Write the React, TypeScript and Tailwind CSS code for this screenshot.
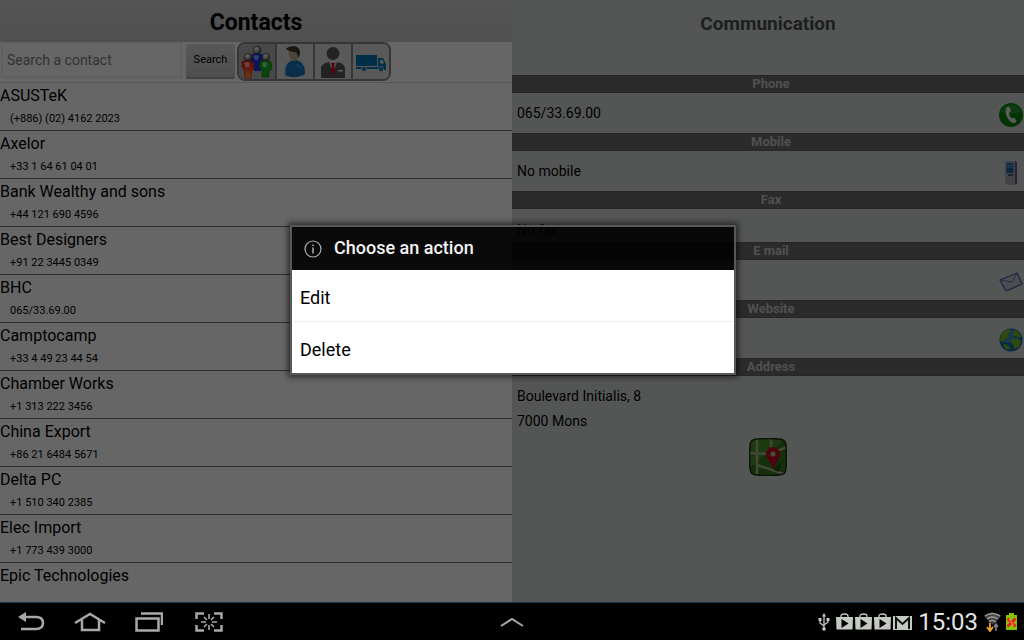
import { Fragment, useState } from "react";
import type { ReactNode } from "react";

const contacts = [
  { name: "ASUSTeK", phone: "(+886) (02) 4162 2023" },
  { name: "Axelor", phone: "+33 1 64 61 04 01" },
  { name: "Bank Wealthy and sons", phone: "+44 121 690 4596" },
  { name: "Best Designers", phone: "+91 22 3445 0349" },
  { name: "BHC", phone: "065/33.69.00" },
  { name: "Camptocamp", phone: "+33 4 49 23 44 54" },
  { name: "Chamber Works", phone: "+1 313 222 3456" },
  { name: "China Export", phone: "+86 21 6484 5671" },
  { name: "Delta PC", phone: "+1 510 340 2385" },
  { name: "Elec Import", phone: "+1 773 439 3000" },
  { name: "Epic Technologies", phone: "" },
];

function EveryoneIcon() {
  return (
    <svg viewBox="0 0 32 34" className="h-[34px] w-8" aria-hidden="true">
      <defs>
        <linearGradient id="fire" x1="0" y1="0" x2="0" y2="1">
          <stop offset="0" stopColor="#e81010" />
          <stop offset="0.5" stopColor="#ff4a18" />
          <stop offset="1" stopColor="#ffa030" />
        </linearGradient>
        <radialGradient id="head" cx="0.4" cy="0.35" r="0.7">
          <stop offset="0" stopColor="#fff" />
          <stop offset="0.6" stopColor="#999" />
          <stop offset="1" stopColor="#333" />
        </radialGradient>
      </defs>
      <path d="M10 10q6-4 12 0l1 7-3 2v7h-7v-8l-3-2z" fill="#1c35e0" />
      <path d="M12 11q3-2 6 0l-1 4h-3z" fill="#7f95ff" />
      <circle cx="16" cy="5" r="4" fill="url(#head)" stroke="#333" strokeWidth="0.6" />
      <path d="M1 17q6-4 11 0l1 7-2 1-1 8H4l-1-9-2-2z" fill="url(#fire)" stroke="#b41010" strokeWidth="0.6" />
      <path d="M3 18q3-2 6 0l-1 4H5z" fill="#ffb0a0" />
      <circle cx="7" cy="12" r="3.8" fill="url(#head)" stroke="#333" strokeWidth="0.6" />
      <path d="M19 17q6-4 11 0l1 7-3 2v6h-7v-8l-3-2z" fill="#18b420" stroke="#0b6b10" strokeWidth="0.6" />
      <path d="M21 18q3-2 5 0l-1 4h-3z" fill="#8bf080" />
      <circle cx="25" cy="12" r="3.8" fill="url(#head)" stroke="#333" strokeWidth="0.6" />
    </svg>
  );
}

function PersonIcon() {
  return (
    <svg viewBox="0 0 32 34" className="h-[34px] w-8" aria-hidden="true">
      <path d="M6 30c-1-6 1-12 6-14l5-1c6 1 9 6 9 14-5 4-15 4-20 1z" fill="#1a72b8" />
      <path d="M11 17c-4 3-4 9-3 14-3-2-3-10 3-14zM15 19c4 0 7 2 8 6-2-3-5-4-8-6z" fill="#3c9be0" />
      <path d="M10 5c1-3 10-3 10 2 0 5-2 9-5 9s-6-5-5-11z" fill="#bfae92" />
      <path d="M7 4c3-4 14-4 14 3 0 3-1 5-2 6 0-3-1-5-3-6-3 0-7-1-9-3z" fill="#453828" />
    </svg>
  );
}

function ManagerIcon() {
  return (
    <svg viewBox="0 0 32 34" className="h-[34px] w-8" aria-hidden="true">
      <circle cx="16" cy="8.5" r="6.5" fill="#555" />
      <path d="M4 33v-9c0-4 3-6 8-7l4 5 4-5c5 1 8 3 8 7v9z" fill="#555" />
      <path d="M12 17l4 10 4-10-4-1z" fill="#ddd" />
      <path d="M14 18h4l-1 3 1 5-2 3-2-3 1-5z" fill="#e00018" />
      <path d="M21 25h5v1.5h-5z" fill="#eee" />
    </svg>
  );
}

function TruckIcon() {
  return (
    <svg viewBox="0 0 32 34" className="h-[34px] w-8" aria-hidden="true">
      <path d="M1 10h21v11H1zM1 22h22v2H1zM23 13h5l3 6v6h-8z" fill="#0873b8" />
      <path d="M25 15h2.5l1.5 3.500H25z" fill="#e6e6e6" />
      <circle cx="9" cy="24" r="2.5" fill="#0873b8" stroke="#d0d0d0" />
      <circle cx="26" cy="24" r="2.5" fill="#0873b8" stroke="#d0d0d0" />
    </svg>
  );
}

function PhoneIcon() {
  return (
    <svg viewBox="0 0 24 24" className="size-6" aria-hidden="true">
      <circle cx="12" cy="12" r="12" fill="#088408" />
      <path d="M2 9a10.500 10.500 0 0 1 20 0q-10 4-20 0z" fill="#48a048" opacity="0.5" />
      <path
        d="M8 4h2.500l1.500 4-2 2c0 2 1.500 4 3 5.500l2-1 2.500 3-1.500 2.500c-4 1-8-5-9-8.500-.6-3-.5-6 1-7.500z"
        fill="#e6e6e6"
      />
    </svg>
  );
}

function MobileIcon() {
  return (
    <svg viewBox="0 0 24 26" className="h-[26px] w-6" aria-hidden="true">
      <path d="M16 1l2 1v22l-3 1z" fill="#5c5c7c" />
      <path d="M6 1h10v24H9l-3-2z" fill="#aaaab0" />
      <path d="M7.500 3h7v10h-7z" fill="#1c62a4" />
      <path d="M8 4h6v4H8z" fill="#3a82c4" />
      <path d="M9 14h5v2H9z" fill="#555" />
      <path d="M8 18h2m2 0h2m-6 3h2m2 0h2" stroke="#888" />
    </svg>
  );
}

function MailIcon() {
  return (
    <svg viewBox="0 0 24 24" className="size-6" aria-hidden="true">
      <path d="M1 10L18 3l5 11-16 7z" fill="#c4c4d4" stroke="#56529c" strokeWidth="1.3" />
      <path d="M1 10l12 2 5-9" fill="none" stroke="#6a66a8" />
      <path d="M7 21l3-9m5-1l8 3" fill="none" stroke="#a6a4c4" strokeWidth="0.7" />
    </svg>
  );
}

function GlobeIcon() {
  return (
    <svg viewBox="0 0 24 24" className="size-6" aria-hidden="true">
      <circle cx="12" cy="12" r="11.500" fill="#1668a8" />
      <circle cx="9" cy="8" r="7" fill="#5aa6d8" opacity="0.6" />
      <path
        d="M2 7c2-3 4-5 8-6l2 2-3 3 1 3-4 2-2 3-3-1zM14 2c4 0 7 3 8 7l-3 1-2-2-4-1 2-2zM13 11l5-1 4 3-2 6-4 2-2-4-2-3zM4 16l5 1 2 3-2 2c-3-1-4-3-5-6z"
        fill="#74b820"
      />
    </svg>
  );
}

function MapIcon() {
  return (
    <svg viewBox="0 0 38 38" className="size-[38px]" aria-hidden="true">
      <defs>
        <clipPath id="tile">
          <path d="M8 1q11-1 22 0 7 0 7 7 1 11 0 22 0 7-7 7-11 1-22 0-7 0-7-7-1-11 0-22 0-7 7-7z" />
        </clipPath>
      </defs>
      <g clipPath="url(#tile)">
        <path d="M0 0h38v38H0z" fill="#35761a" />
        <path d="M0 0h38L0 30z" fill="#4b8c2a" />
        <path d="M0 15l21 1 17-7M8 0v38M22 0v12M8 27l27 9" stroke="#a5b488" strokeWidth="2.5" fill="none" />
        <path d="M24 31l9-7-3 10z" fill="#20500c" />
      </g>
      <path
        d="M8 1q11-1 22 0 7 0 7 7 1 11 0 22 0 7-7 7-11 1-22 0-7 0-7-7-1-11 0-22 0-7 7-7z"
        fill="none"
        stroke="#1d3412"
        strokeWidth="1.5"
      />
      <path d="M24 9a7 7 0 0 1 7 7c0 5-5 9-6.500 15C23 25 17 21 17 16a7 7 0 0 1 7-7z" fill="#c40826" />
      <circle cx="24" cy="16" r="2.6" fill="#a8c890" />
    </svg>
  );
}

const filters = [
  { id: "all", label: "Everyone", icon: <EveryoneIcon /> },
  { id: "person", label: "Persons", icon: <PersonIcon /> },
  { id: "manager", label: "Managers", icon: <ManagerIcon /> },
  { id: "supplier", label: "Suppliers", icon: <TruckIcon /> },
];

const details = [
  { title: "Phone", value: "065/33.69.00", action: "Call", icon: <PhoneIcon /> },
  { title: "Mobile", value: "No mobile", action: "Call mobile", icon: <MobileIcon /> },
  { title: "Fax", value: "No fax" },
  { title: "E mail", value: "", action: "Send e-mail", icon: <MailIcon /> },
  { title: "Website", value: "", action: "Open website", icon: <GlobeIcon /> },
];

function SectionBar({ children }: { children: ReactNode }) {
  return (
    <h3 className="h-[18px] border-y border-[#606060] bg-[#6b6b6b] pl-1.5 text-center text-[13px] leading-4 font-bold text-[#c8c8c8]">
      {children}
    </h3>
  );
}

function ContactsPane() {
  const [filter, setFilter] = useState("all");

  return (
    <section className="flex min-w-0 flex-1 flex-col bg-white">
      <h1 className="h-[42px] shrink-0 bg-linear-to-b from-[#d2d2d2] to-[#c6c6c6] text-center text-[23px] leading-[45px] font-bold text-black">
        Contacts
      </h1>
      <form
        className="flex h-[41px] shrink-0 items-start gap-0.5 border-b border-[#d8d8d8] pl-px"
        onSubmit={(e) => e.preventDefault()}
      >
        <input
          type="search"
          aria-label="Search a contact"
          placeholder="Search a contact"
          className="mr-0.5 h-9 w-[181px] border-2 border-[#f0f0f0] px-1 text-sm placeholder:text-[#7c7c7c]"
        />
        <button
          type="submit"
          className="mt-0.5 h-[35px] w-[49px] rounded-xs border-b-2 border-[#a0a0a0] bg-linear-to-b from-[#dadada] to-[#c4c4c4] text-[11px] text-black"
        >
          Search
        </button>
        <div className="flex h-[39px] w-[154px] overflow-hidden rounded-lg border-2 border-[#888]">
          {filters.map((f) => (
            <button
              key={f.id}
              type="button"
              aria-label={f.label}
              aria-pressed={filter === f.id}
              onClick={() => setFilter(f.id)}
              className="flex flex-1 items-center justify-center border-l-2 border-[#888] bg-[#dedede] first:border-l-0 aria-pressed:bg-[#b4b4b4]"
            >
              {f.icon}
            </button>
          ))}
        </div>
      </form>
      <ul className="min-h-0 flex-1 overflow-hidden">
        {contacts.map((c) => (
          <li key={c.name} className="h-12 border-b border-[#747474] pt-px last:border-b-0">
            <p className="text-base leading-6 text-black">{c.name}</p>
            <p className="pl-2.5 text-[11px] leading-[22px] text-black">{c.phone}</p>
          </li>
        ))}
      </ul>
    </section>
  );
}

function CommunicationPane() {
  return (
    <section className="min-w-0 flex-1 bg-[#d2d7d4]">
      <h2 className="h-[75px] text-center text-[19px] leading-[47px] font-bold text-[#4a4f4c]">Communication</h2>
      {details.map((d) => (
        <Fragment key={d.title}>
          <SectionBar>{d.title}</SectionBar>
          <div className={d.icon ? "flex h-10 items-center justify-between pl-[5px]" : "flex h-[33px] items-center pt-2 pl-[5px]"}>
            <span className="text-sm text-black">{d.value}</span>
            {d.icon && (
              <button type="button" aria-label={d.action} className="mt-1 mr-px">
                {d.icon}
              </button>
            )}
          </div>
        </Fragment>
      ))}
      <SectionBar>Address</SectionBar>
      <address className="pt-2 pl-[5px] text-sm leading-[25px] text-black not-italic">
        Boulevard Initialis, 8
        <br />
        7000 Mons
      </address>
      <button type="button" aria-label="Show on map" className="mx-auto mt-1 block">
        <MapIcon />
      </button>
    </section>
  );
}

function ActionDialog() {
  return (
    <div className="absolute inset-0 flex items-center justify-center bg-black/60 pb-0.5 pl-0.5">
      <div
        role="dialog"
        aria-labelledby="dialog-title"
        className="w-[446px] border-2 border-[#585858] shadow-[0_0_6px_2px_rgba(0,0,0,0.6)]"
      >
        <div className="flex h-[43px] items-center gap-3 bg-black/90 pl-3">
          <svg viewBox="0 0 18 18" className="size-[18px]" fill="none" stroke="#b0b0b0" aria-hidden="true">
            <circle cx="9" cy="9" r="8" strokeWidth="1.2" />
            <path d="M9 4.500v1.500M9 7.500v6" strokeWidth="1.5" />
          </svg>
          <h2 id="dialog-title" className="pb-0.5 text-lg font-medium text-[#f3f3f3]">
            Choose an action
          </h2>
        </div>
        <button type="button" className="block h-[52px] w-full border-b border-[#f0f0f0] bg-white pt-1 pl-2 text-left text-lg text-black">
          Edit
        </button>
        <button type="button" className="block h-[51px] w-full bg-white pt-1 pl-2 text-left text-lg text-black">
          Delete
        </button>
      </div>
    </div>
  );
}

function StoreIcon() {
  return (
    <svg viewBox="0 0 17 18" className="h-[18px] w-[17px]" aria-hidden="true">
      <path d="M5 5V3q0-2 3.500-2T12 3v2" fill="none" stroke="#c5c9c3" strokeWidth="1.3" />
      <path d="M0 4h17l-.5 12.500H.5z" fill="#c5c9c3" />
      <path d="M5.500 6l7 4.500-7 4.500z" fill="#000" />
    </svg>
  );
}

function SystemBar() {
  return (
    <footer className="grid h-[38px] shrink-0 grid-cols-[1fr_auto_1fr] items-center border-t border-[#0a3a50] bg-black">
      <nav className="flex items-center gap-7 pl-[17px]">
        <button type="button" aria-label="Back">
          <svg viewBox="0 0 28 20" className="h-5 w-7" fill="none" stroke="#a8a8a8" strokeWidth="2.5" aria-hidden="true">
            <path d="M7 5h12c4 0 7 2 7 6s-3 6-7 6H4" />
            <path d="M1 5l8-5v10z" fill="#a8a8a8" stroke="none" />
          </svg>
        </button>
        <button type="button" aria-label="Home">
          <svg viewBox="0 0 34 20" className="h-5 w-[34px]" fill="none" stroke="#a8a8a8" strokeWidth="2.5" aria-hidden="true">
            <path d="M2 11l15-9 15 9M9 8v10h17V8" />
          </svg>
        </button>
        <button type="button" aria-label="Recent apps">
          <svg viewBox="0 0 28 20" className="h-5 w-7" fill="none" stroke="#a8a8a8" strokeWidth="2.5" aria-hidden="true">
            <path d="M1.500 6.500h22v12h-22zM6 1.500h21V13" />
          </svg>
        </button>
        <button type="button" aria-label="Screenshot" className="ml-1">
          <svg viewBox="0 0 28 20" className="h-5 w-7" fill="none" stroke="#a8a8a8" strokeWidth="2.5" aria-hidden="true">
            <path d="M1.500 7V1.500H9M19 1.500h7.500V7M1.500 13v5.500H9M19 18.500h7.500V13" />
            <path d="M14 2v5M14 13v5M6 10h5M17 10h5M9 5l3 3M19 5l-3 3M9 15l3-3M19 15l-3-3" strokeWidth="1.6" />
          </svg>
        </button>
      </nav>
      <button type="button" aria-label="Open tray">
        <svg viewBox="0 0 24 10" className="h-2.5 w-6" fill="none" stroke="#a8a8a8" strokeWidth="2" aria-hidden="true">
          <path d="M1 9l11-7 11 7" />
        </svg>
      </button>
      <div className="flex items-center justify-end gap-0.5 pr-1.5">
        <svg viewBox="0 0 12 18" className="mr-1 h-[18px] w-3" fill="none" stroke="#c5c9c3" strokeWidth="1.3" aria-hidden="true">
          <path d="M6 2v14M6 13l-4-3V7M6 12l4-3V6" />
          <path d="M6 0l2 3.500H4zM.5 5h3v3h-3zM8.500 5h3v3h-3z" fill="#c5c9c3" stroke="none" />
          <circle cx="6" cy="16" r="1.8" fill="#c5c9c3" stroke="none" />
        </svg>
        <StoreIcon />
        <StoreIcon />
        <StoreIcon />
        <svg viewBox="0 0 19 18" className="h-[18px] w-[19px]" aria-hidden="true">
          <path d="M0 3h19v14H0z" fill="#c5c9c3" />
          <path d="M3 16V5l6.500 6L16 5v11" fill="none" stroke="#111" strokeWidth="2" />
        </svg>
        <time className="mx-1 text-2xl text-[#e4e4e4]">15:03</time>
        <svg viewBox="0 0 17 20" className="h-5 w-[17px]" fill="none" aria-hidden="true">
          <path d="M0 4q8-7 17 0L9 13z" fill="#444" />
          <path d="M1 4q7-5 15 0M3 7q5-4 11 0M5 10q3-3 7 0" stroke="#999" strokeWidth="1.5" />
          <path d="M6 11v7M3 15l3 4 3-4" stroke="#f0a030" strokeWidth="1.8" />
          <path d="M12 19v-6M10 15l2-3 2 3" stroke="#888" strokeWidth="1.5" />
        </svg>
        <svg viewBox="0 0 13 18" className="ml-0.5 h-[18px] w-[13px]" aria-hidden="true">
          <path d="M4 0h5v2h3v15H1V2h3z" fill="#83c400" />
          <path d="M2.500 5.500l8 8M10.500 5.500l-8 8" stroke="#f01818" strokeWidth="2.5" />
          <path d="M4.500 6l4 7" stroke="#ffd0c0" strokeWidth="0.7" />
        </svg>
      </div>
    </footer>
  );
}

export default function App() {
  return (
    <div className="flex h-screen flex-col overflow-hidden font-['Roboto',sans-serif]">
      <main className="relative flex min-h-0 flex-1">
        <ContactsPane />
        <CommunicationPane />
        <ActionDialog />
      </main>
      <SystemBar />
    </div>
  );
}
